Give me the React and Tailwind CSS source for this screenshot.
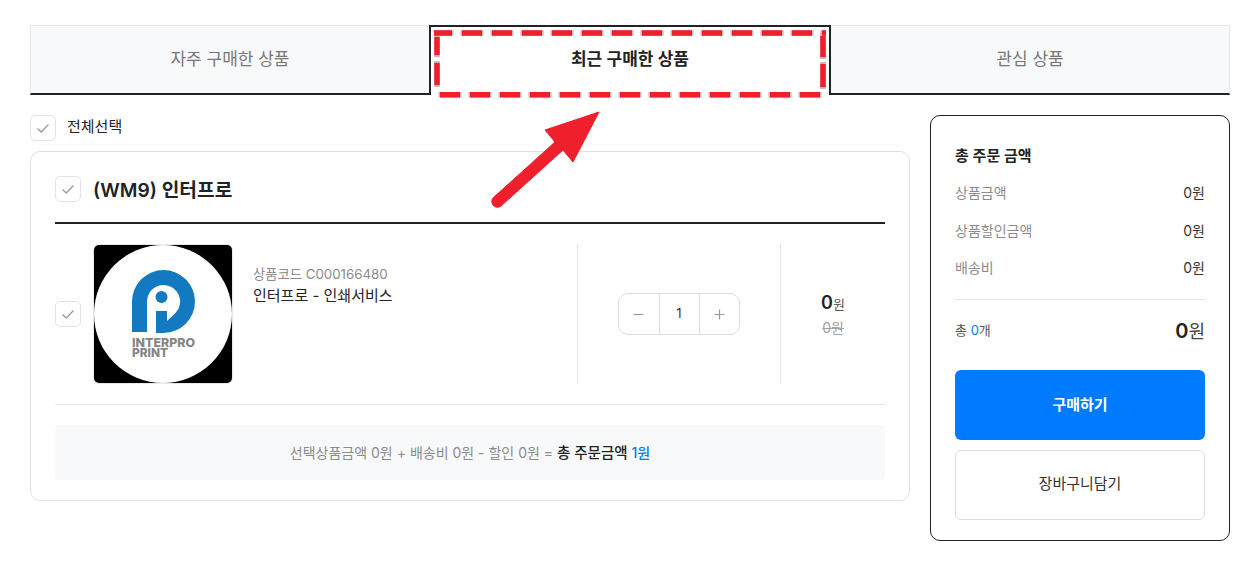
import React from "react";

const font = "font-['Inter','Noto_Sans_CJK_KR',sans-serif]";

function Check() {
  return (
    <span className="flex h-[26px] w-[26px] shrink-0 items-center justify-center rounded-[5px] border border-[#e3e4e6] bg-white">
      <svg width="14" height="14" viewBox="0 0 14 14" fill="none" stroke="#9a9a9a" strokeWidth="1.3">
        <path d="M1.5 7.5 L5.2 11 L12.5 3.5" />
      </svg>
    </span>
  );
}

function Row({ label, value }) {
  return (
    <div className="flex h-[37.5px] items-center justify-between text-[14px]">
      <span className="text-[#8b8b8b]">{label}</span>
      <span className="text-[#333]">{value}</span>
    </div>
  );
}

function Logo() {
  return (
    <svg width="138" height="138" viewBox="0 0 138 138" className="block">
      <rect width="138" height="138" rx="5" fill="#000" />
      <circle cx="69" cy="69" r="69" fill="#fff" />
      <path
        d="M38 87 V56.5 A31.5 31.5 0 0 1 101 56.5 A31.5 31.5 0 0 1 69.5 88 H62 V66 H73 V76 L81.5 68 A16.5 16.5 0 0 0 69.5 40 A16.5 16.5 0 0 0 53 56.5 V87 Z"
        fill="#137ac1"
      />
      <circle cx="67.5" cy="52" r="6" fill="#137ac1" />
      <text x="38" y="101.5" textLength="63" lengthAdjust="spacingAndGlyphs" fill="#858585" fontSize="12" fontWeight="800" fontFamily="Inter, sans-serif">INTERPRO</text>
      <text x="38" y="112" textLength="36" lengthAdjust="spacingAndGlyphs" fill="#858585" fontSize="12" fontWeight="800" fontFamily="Inter, sans-serif">PRINT</text>
    </svg>
  );
}

export default function App() {
  return (
    <div className={`relative h-[569px] w-[1250px] overflow-hidden bg-white pt-[25px] pr-[20px] pl-[30px] text-[#222] ${font}`}>
      <div className="flex h-[70px]">
        <div className="flex w-[399px] shrink-0 items-center justify-center border-t border-b-2 border-l border-t-[#e5e7eb] border-b-[#222] border-l-[#e5e7eb] bg-[#f8f9fb] text-[17px] text-[#777]">자주 구매한 상품</div>
        <div className="flex w-[402px] shrink-0 items-center justify-center border-x-2 border-t-2 border-[#222] bg-white pb-[2px] text-[17px] font-semibold">최근 구매한 상품</div>
        <div className="flex w-[399px] shrink-0 items-center justify-center border-t border-r border-b-2 border-t-[#e5e7eb] border-r-[#e5e7eb] border-b-[#222] bg-[#f8f9fb] text-[17px] text-[#777]">관심 상품</div>
      </div>

      <div className="mt-5 flex items-start gap-5">
        <div className="w-[880px] shrink-0">
          <div className="flex h-[26px] items-center gap-[11px] text-[15px]">
            <Check />
            <span className="-mt-[2px]">전체선택</span>
          </div>

          <div className="mt-[10px] h-[350px] rounded-[10px] border border-[#dfe0e2] px-6 pt-6">
            <div className="flex h-[48px] items-start gap-3 border-b-2 border-[#222]">
              <Check />
              <span className="text-[19.2px] leading-[28px] font-semibold">(WM9) 인터프로</span>
            </div>

            <div className="flex h-[181px] border-b border-[#e5e7eb] pt-[20px] pb-[20px]">
              <div className="flex h-[140px] w-[522px] items-center">
                <Check />
                <div className="ml-3 h-[140px] w-[140px] shrink-0 rounded-[6px] border border-[#e5e7eb]"><Logo /></div>
                <div className="ml-[20px] self-start pt-[20px]">
                  <div className="text-[13.3px] leading-5 text-[#8b8b8b]">상품코드 C000166480</div>
                  <div className="mt-[2px] text-[15px] leading-5">인터프로 - 인쇄서비스</div>
                </div>
              </div>
              <div className="flex h-[140px] w-[203px] items-center justify-center border-l border-[#e5e7eb]">
                <div className="flex h-[42px] w-[122px] rounded-[10px] border border-[#dcdddf] text-[#999]">
                  <span className="flex w-10 items-center justify-center">
                    <svg width="12" height="12" viewBox="0 0 12 12" stroke="#999" strokeWidth="1.2"><path d="M0.5 6.5 H10.5" /></svg>
                  </span>
                  <span className="flex w-[41px] items-center justify-center border-x border-[#dcdddf] pr-px text-[13px] text-[#333]">1</span>
                  <span className="flex w-[39px] items-center justify-center">
                    <svg width="12" height="12" viewBox="0 0 12 12" stroke="#999" strokeWidth="1.2"><path d="M0.5 6.5 H10.5 M5.5 1.5 V11.5" /></svg>
                  </span>
                </div>
              </div>
              <div className="flex h-[140px] w-[105px] flex-col items-center justify-center border-l border-[#e5e7eb] pt-[2px]">
                <div className="flex h-[26px] items-baseline">
                  <span className="text-[18px] font-semibold">0</span>
                  <span className="text-[13px] text-[#555]">원</span>
                </div>
                <div className="text-[14px] leading-[26px] text-[#a3a3a3] line-through">0원</div>
              </div>
            </div>

            <div className="mt-5 flex h-[55px] items-center justify-center rounded-[4px] bg-[#f8f9fb] text-[14px] text-[#8b8b8b]">
              <span>선택상품금액 0원 + 배송비 0원 - 할인 0원 =&nbsp;</span>
              <span className="text-[14.5px] font-medium text-[#222]">총 주문금액&nbsp;</span>
              <span className="font-medium text-[#007aff]">1원</span>
            </div>
          </div>
        </div>

        <aside className="h-[426px] w-[300px] shrink-0 rounded-[10px] border border-[#222] px-6 pt-[25px]">
          <div className="h-[30px] text-[15px] leading-[30px] font-semibold">총 주문 금액</div>
          <div className="mt-[3px]">
            <Row label="상품금액" value="0원" />
            <Row label="상품할인금액" value="0원" />
            <Row label="배송비" value="0원" />
          </div>
          <div className="mt-[12px] border-t border-[#e5e7eb] pt-[13px]">
            <div className="flex h-[36px] items-center justify-between">
              <span className="text-[13px] text-[#555]">총 <span className="text-[#007aff]">0</span>개</span>
              <span className="flex items-baseline">
                <span className="text-[20px] font-semibold">0</span>
                <span className="text-[18px] text-[#444]">원</span>
              </span>
            </div>
          </div>
          <div className="mt-[21px] flex h-[70px] items-center justify-center rounded-[6px] bg-[#007aff] pt-px text-[15px] font-semibold text-white">구매하기</div>
          <div className="mt-[10px] flex h-[70px] items-center justify-center rounded-[6px] border border-[#dcdddf] text-[15px] text-[#333]">장바구니담기</div>
        </aside>
      </div>

      <svg className="pointer-events-none absolute top-0 left-0" width="1250" height="569" fill="none">
        <g stroke="#c9b4b6" strokeWidth="5.5">
          <path d="M434 33 H826" strokeDasharray="23 7" strokeDashoffset="3.5" />
          <path d="M434 94.8 H826" strokeDasharray="23 7" strokeDashoffset="25.5" />
          <path d="M437 35 V57 M437 61 V87 M823 33 V59 M823 62 V89" />
        </g>
        <g stroke="#ef1f2b" strokeWidth="5.5">
          <path d="M434 33 H826" strokeDasharray="20 10" strokeDashoffset="2" />
          <path d="M434 94.8 H826" strokeDasharray="20 10" strokeDashoffset="24" />
          <path d="M437 37 V55 M437 63 V85 M823 36 V57 M823 64 V87" />
        </g>
        <path d="M599 112 L545 130 L555 142 L494 197 A5.5 5.5 0 0 0 501 206 L563 150 L573 162 Z" fill="#ef1f2b" stroke="#ef1f2b" strokeWidth="1" strokeLinejoin="round" />
      </svg>
    </div>
  );
}
